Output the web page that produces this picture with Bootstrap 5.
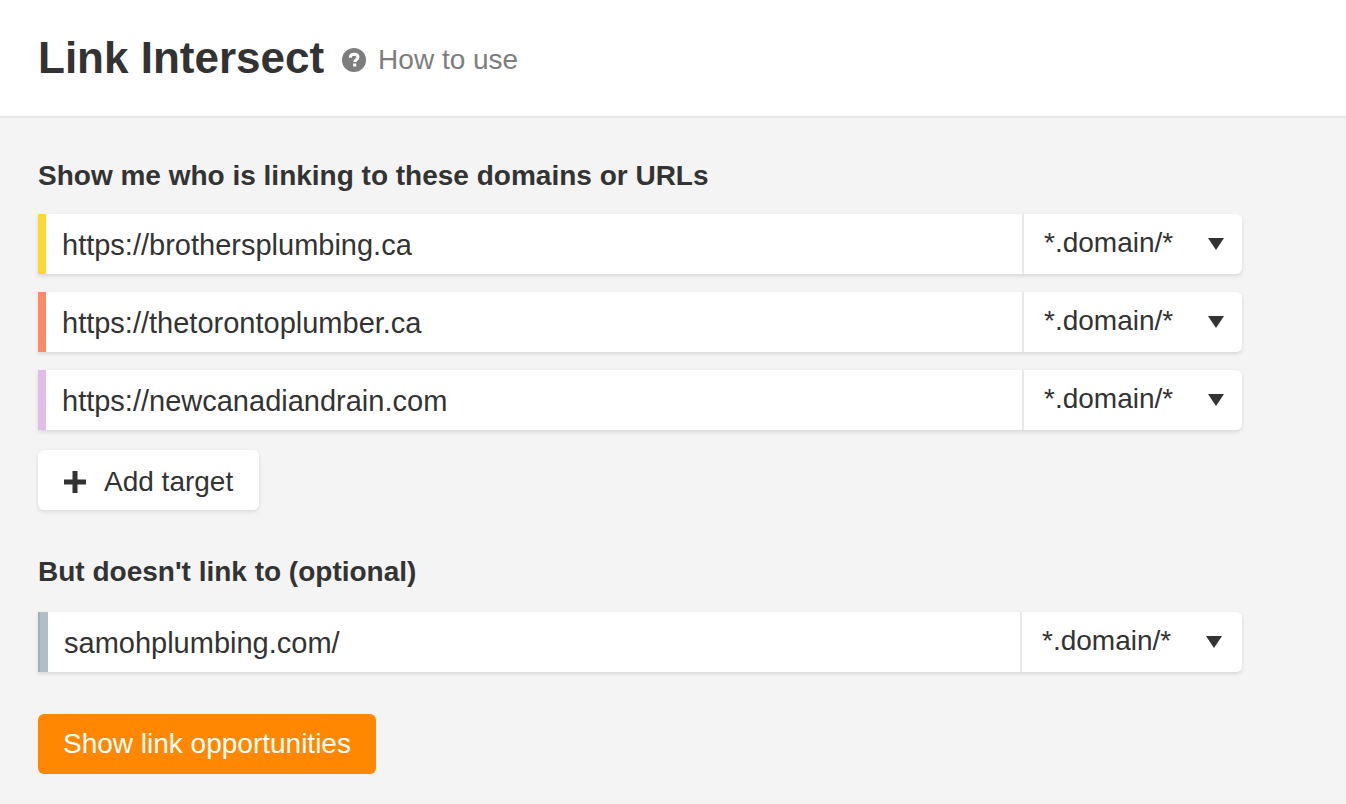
<!DOCTYPE html>
<html lang="en">
<head>
<meta charset="utf-8">
<meta name="viewport" content="width=device-width, initial-scale=1">
<title>Link Intersect</title>
<link href="https://cdn.jsdelivr.net/npm/bootstrap@5.3.0/dist/css/bootstrap.min.css" rel="stylesheet">
<style>
  body { background: #f4f4f4; color: #333; font-family: "Liberation Sans", Arial, sans-serif; font-size: 28px; line-height: 32px; }
  .page-head { background: #fff; border-bottom: 2px solid #e8e8e8; padding: 32px 38px; }
  .page-title { font-size: 44px; line-height: 52px; font-weight: 700; }
  .help-link, .help-link:hover { color: #7d7d7d; gap: 10px; }
  .page-body { padding: 42px 104px 30px 38px; }
  .group-title { font-size: 28px; line-height: 32px; font-weight: 700; margin-bottom: 22px; }
  .group-title-excluded { margin-top: 46px; margin-bottom: 24px; }
  .targets { display: grid; gap: 18px; }
  .target { height: 60px; flex-wrap: nowrap; background: #fff; border-left: 8px solid var(--mark); border-radius: 0 6px 6px 0; box-shadow: 0 2px 4px rgba(0,0,0,.12); }
  .target-excluded { border-left: 2px solid #9fb0b5; }
  .target-excluded .form-control { border-left: 8px solid var(--mark); }
  .target .form-control { height: 60px; padding: 2px 16px 0; border-width: 0; border-radius: 0; background: transparent; color: #333; font-size: 29px; line-height: 32px; }
  .target-excluded.target .form-control { border-left: 8px solid var(--mark); }
  .target .form-select { flex: 0 0 220px; height: 60px; padding: 0 60px 2px 20px; border: 0; border-left: 2px solid #e8e8e8; border-radius: 0 6px 6px 0; color: #333; font-size: 28px; line-height: 32px;
    background: #fff url("data:image/svg+xml,%3Csvg xmlns='http://www.w3.org/2000/svg' viewBox='0 0 16 12'%3E%3Cpath d='M0 0h16L8 12z' fill='%23333'/%3E%3C/svg%3E") no-repeat right 18px center / 16px 12px; }
  .target-excluded.target .form-select { flex-basis: 222px; background-position: right 20px center; }
  .action { height: 60px; border: 0; border-radius: 6px; font-size: 28px; line-height: 32px; }
  .action-add, .action-add:hover { background: #fff; color: #333; margin-top: 20px; padding: 4px 26px 0; gap: 18px; box-shadow: 0 2px 4px rgba(0,0,0,.1); }
  .action-show, .action-show:hover { background: #ff8800; color: #fff; margin-top: 42px; padding: 0 25px; }
</style>
</head>
<body>
<header class="page-head d-flex align-items-center">
  <h1 class="page-title mb-0 me-3">Link Intersect</h1>
  <a href="#" class="help-link d-flex align-items-center text-decoration-none pt-1">
    <svg width="28" height="28" viewBox="0 0 28 28" aria-hidden="true">
      <circle cx="14" cy="14" r="12" fill="#7d7d7d"/>
      <path d="M10.2 11.8c.1-2.2 1.6-3.5 3.9-3.5s3.9 1.2 3.9 3c0 2.5-3.3 2.4-3.3 4.8" fill="none" stroke="#fff" stroke-width="2.9"/>
      <path d="M13.1 17.5h3.2v3h-3.2z" fill="#fff"/>
    </svg>
    <span>How to use</span>
  </a>
</header>
<main class="page-body">
  <form onsubmit="return false">
    <h2 class="group-title">Show me who is linking to these domains or URLs</h2>
    <div class="targets">
      <div class="input-group target" style="--mark:#fdd835">
        <input class="form-control" type="text" aria-label="Target 1" value="https://brothersplumbing.ca">
        <select class="form-select" aria-label="Target 1 mode"><option>*.domain/*</option></select>
      </div>
      <div class="input-group target" style="--mark:#ff8a65">
        <input class="form-control" type="text" aria-label="Target 2" value="https://thetorontoplumber.ca">
        <select class="form-select" aria-label="Target 2 mode"><option>*.domain/*</option></select>
      </div>
      <div class="input-group target" style="--mark:#e1bee7">
        <input class="form-control" type="text" aria-label="Target 3" value="https://newcanadiandrain.com">
        <select class="form-select" aria-label="Target 3 mode"><option>*.domain/*</option></select>
      </div>
    </div>
    <button type="button" class="btn action action-add d-flex align-items-center">
      <svg width="22" height="22" viewBox="0 0 22 22" aria-hidden="true"><path d="M11 0v22M0 11h22" stroke="#333" stroke-width="5"/></svg>
      <span>Add target</span>
    </button>
    <h2 class="group-title group-title-excluded">But doesn't link to (optional)</h2>
    <div class="input-group target target-excluded" style="--mark:#b0bec5">
      <input class="form-control" type="text" aria-label="Excluded target" value="samohplumbing.com/">
      <select class="form-select" aria-label="Excluded target mode"><option>*.domain/*</option></select>
    </div>
    <button type="submit" class="btn action action-show">Show link opportunities</button>
  </form>
</main>
<script src="https://cdn.jsdelivr.net/npm/bootstrap@5.3.0/dist/js/bootstrap.bundle.min.js"></script>
</body>
</html>
